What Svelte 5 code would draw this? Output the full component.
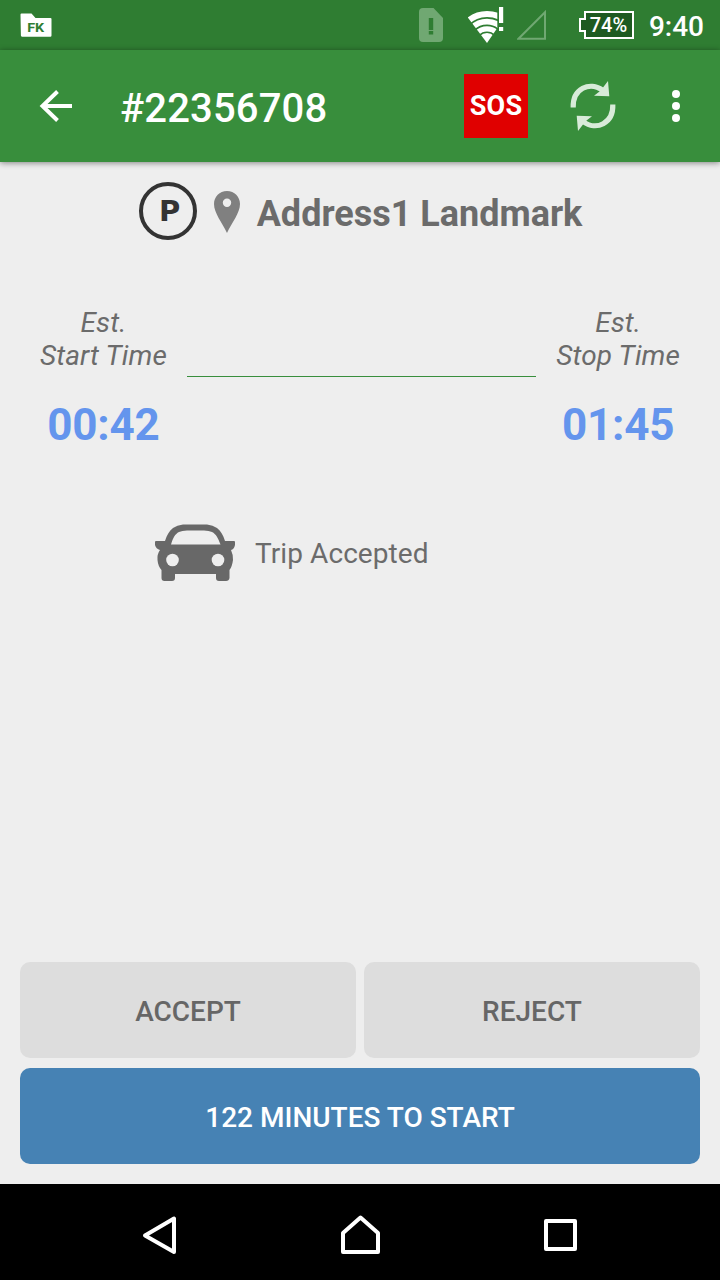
<script>
	let tripId = "22356708";
	let battery = 74;
	let clock = "9:40";
	let address = "Address1 Landmark";
	let minutesToStart = 122;

	const times = [
		{ label: "Start Time", value: "00:42" },
		{ label: "Stop Time", value: "01:45" }
	];
</script>

<div class="screen">
	<div class="status">
		<svg class="folder" width="32" height="25" viewBox="0 0 32 25">
			<path
				d="M1.5 .5H11.5L15.500 5H30.500Q31.500 5 31.500 6V22.500Q31.500 23.700 30.300 23.700H2Q.900 23.700 .900 22.600L.500 1.500Q.500 .500 1.500 .5Z"
				fill="#fff"
			/>
			<text x="7.200" y="19.200" textLength="17" lengthAdjust="spacingAndGlyphs">FK</text>
		</svg>

		<div class="indicators">
			<svg width="24" height="34" viewBox="0 0 24 34">
				<path
					d="M4 0H14.500L24 10V30Q24 34 20 34H4Q0 34 0 30V4Q0 0 4 0Z"
					fill="#70a872"
				/>
				<path d="M9.800 10H14.200V22H9.800ZM9.800 23H14.200V26.500H9.800Z" fill="#2f7d32" />
			</svg>
			<svg class="wifi" width="36" height="36" viewBox="0 0 36 36">
				<clipPath id="fan"><path d="M19 36L-2 8V0H29.300V21L19 36Z" /></clipPath>
				<g clip-path="url(#fan)" fill="none" stroke="#fff">
					<circle cx="19" cy="36" r="29" stroke-width="6" />
					<circle cx="19" cy="36" r="21.300" stroke-width="5.800" />
					<circle cx="19" cy="36" r="14.200" stroke-width="5.200" />
					<circle cx="19" cy="36" r="5" stroke-width="10" />
				</g>
				<path d="M31 0H35.200V16H31ZM31 20H35.200V24H31Z" fill="#fff" />
			</svg>
			<svg class="signal" width="30" height="30" viewBox="0 0 30 30">
				<path d="M1.500 28.700H28V2.200Z" fill="none" stroke="#70a872" stroke-width="2" />
			</svg>
			<div class="battery">
				<svg width="55" height="28" viewBox="0 0 55 28">
					<path
						d="M6 1H54V27H6V20H1V8H6Z"
						fill="#1e5a21"
						stroke="#fff"
						stroke-width="2"
					/>
				</svg>
				<span>{battery}%</span>
			</div>
			<span class="clock">{clock}</span>
		</div>
	</div>

	<header>
		<svg class="back" width="34" height="34" viewBox="0 0 34 34">
			<path
				d="M18.500 2.500L3.500 17L18.500 31.500M3.500 17H33"
				fill="none"
				stroke="#fff"
				stroke-width="4"
			/>
		</svg>
		<h1>#{tripId}</h1>
		<div class="sos">SOS</div>
		<svg class="refresh" width="46" height="50" viewBox="0 0 46 50">
			<g id="half">
				<path d="M3.200 26.500C2.500 8 19.500 -.500 33 9.500" fill="none" stroke="#d8ebd9" stroke-width="5.200" />
				<path d="M38 0L39.300 15.200L24 14.800L29.500 10.500L33 6.500Z" fill="#d8ebd9" />
			</g>
			<use href="#half" transform="rotate(180 23 25)" />
		</svg>
		<svg class="more" width="8" height="32" viewBox="0 0 8 32">
			<circle cx="4" cy="4" r="4" />
			<circle cx="4" cy="16" r="4" />
			<circle cx="4" cy="28" r="4" />
		</svg>
	</header>

	<main>
		<div class="address">
			<div class="badge">P</div>
			<svg class="pin" width="26" height="42" viewBox="0 0 26 42">
				<path
					d="M13 0C5.500 0 0 5.800 0 13C0 22 8 31.500 13 42C18 31.500 26 22 26 13C26 5.800 20.500 0 13 0ZM13 7.500A4.200 4.200 0 1 1 13 15.900A4.200 4.200 0 1 1 13 7.500Z"
					fill="#808080"
					fill-rule="evenodd"
				/>
			</svg>
			<h2>{address}</h2>
		</div>

		<div class="times">
			{#each times as time, i}
				{#if i > 0}
					<div class="line"></div>
				{/if}
				<div class="time">
					<p>Est.<br />{time.label}</p>
					<strong>{time.value}</strong>
				</div>
			{/each}
		</div>

		<div class="trip">
			<svg width="80" height="58" viewBox="0 0 80 58">
				<path
					d="M1 17H10C12 11 14 7 18 4Q22 1 28 .500H52Q58 1 62 4C66 7 68 11 70 17H79Q80 17 80 18V21Q79 25.500 76 26Q78 30 78 36Q77 43 74.500 46V54Q74 57 71 57H64Q61 57 61 54V50H20V54Q20 57 17 57H9.500Q6.500 57 6.500 54V46Q3 42 2.500 36Q2 30 5 26Q1 25 0 21V18Q0 17 1 17ZM16 20.500H65.500C63 14 61 10 57 8Q54 6.500 49 6.500H32Q27 6.500 24 8C20 10 18 14 16 20.500Z"
					fill="#686868"
					fill-rule="evenodd"
				/>
				<circle cx="17.500" cy="36" r="6.300" fill="#eee" />
				<circle cx="63" cy="36" r="6.300" fill="#eee" />
			</svg>
			<p>Trip Accepted</p>
		</div>

		<div class="actions">
			<button type="button">ACCEPT</button>
			<button type="button">REJECT</button>
			<button type="button" class="start">{minutesToStart} MINUTES TO START</button>
		</div>
	</main>

	<nav>
		<svg width="40" height="40" viewBox="0 0 40 40">
			<path d="M5 20.500L34 3.500V37Z" />
		</svg>
		<svg width="40" height="40" viewBox="0 0 40 40">
			<path d="M20.500 2.500L38 18V37H3V18Z" />
		</svg>
		<svg width="40" height="40" viewBox="0 0 40 40">
			<path d="M6 6H35V34H6Z" />
		</svg>
	</nav>
</div>

<style>
	:global(body) {
		margin: 0;
	}

	.screen {
		width: 720px;
		height: 1280px;
		display: flex;
		flex-direction: column;
		overflow: hidden;
		background: #eee;
		color: #6b6b6b;
		font-family: Roboto, sans-serif;
	}

	svg {
		display: block;
		flex: none;
	}

	h1,
	h2,
	p {
		margin: 0;
	}

	.status {
		height: 50px;
		flex: none;
		display: flex;
		justify-content: space-between;
		align-items: center;
		box-sizing: border-box;
		padding: 0 16px 0 20px;
		background: #2f7d32;
		color: #fff;
	}

	.folder text {
		font: 700 13px Roboto, sans-serif;
		fill: #2f7d32;
	}

	.indicators {
		display: flex;
		align-items: center;
		height: 52px;
	}

	.wifi {
		margin: 0 13px 0 25px;
	}

	.signal {
		margin-right: 32px;
	}

	.battery {
		display: grid;
		align-items: center;
		margin-right: 15px;
	}

	.battery > * {
		grid-area: 1 / 1;
	}

	.battery span {
		padding-left: 4px;
		text-align: center;
		font-size: 20px;
		font-weight: 500;
		line-height: 28px;
	}

	.clock {
		padding-top: 4px;
		font-size: 28px;
		font-weight: 500;
		line-height: 32px;
	}

	header {
		height: 112px;
		flex: none;
		display: flex;
		align-items: center;
		box-sizing: border-box;
		padding: 0 40px 0 39px;
		background: #388e3c;
		box-shadow: 0 1px 6px rgba(0, 0, 0, 0.45);
		color: #fff;
	}

	h1 {
		flex: 1;
		padding: 6px 0 0 47px;
		font-size: 40px;
		font-weight: 500;
		letter-spacing: 0.15px;
		line-height: 48px;
	}

	.sos {
		width: 64px;
		height: 64px;
		background: #e00000;
		font-size: 27px;
		font-weight: 700;
		letter-spacing: 0.2px;
		line-height: 65px;
		text-align: center;
	}

	.refresh {
		margin: 0 56.5px 0 41.5px;
	}

	.more {
		fill: #fff;
	}

	main {
		flex: 1;
		display: flex;
		flex-direction: column;
		padding: 20px 20px;
	}

	.address {
		display: flex;
		align-items: center;
		justify-content: center;
		height: 58px;
		padding-left: 1px;
	}

	.badge {
		width: 58px;
		height: 58px;
		box-sizing: border-box;
		padding-left: 4px;
		border: 4px solid #333;
		border-radius: 50%;
		margin-right: 17px;
		color: #333;
		font: 700 29px/50px "DejaVu Sans", sans-serif;
		text-align: center;
	}

	.pin {
		margin-top: 2px;
	}

	h2 {
		padding: 6px 0 0 17px;
		font-size: 36px;
		font-weight: 700;
		line-height: 44px;
	}

	.times {
		display: flex;
		justify-content: space-between;
		margin: 66px 20px 0;
	}

	.time {
		text-align: center;
	}

	.time p {
		font-size: 28px;
		font-style: italic;
		letter-spacing: 0.1px;
		line-height: 33px;
	}

	.time strong {
		display: block;
		margin-top: 27px;
		color: #6495ed;
		font-size: 44px;
		letter-spacing: -0.2px;
		line-height: 52px;
	}

	.line {
		flex: 1;
		height: 1px;
		margin: 70px 20px 0;
		background: #388e3c;
	}

	.trip {
		display: flex;
		align-items: center;
		margin: 73px 0 0 135px;
		font-size: 28px;
	}

	.trip p {
		padding-left: 20px;
		letter-spacing: 0.08px;
	}

	.actions {
		display: grid;
		grid-template-columns: 1fr 1fr;
		gap: 10px 8px;
		margin-top: auto;
	}

	button {
		height: 96px;
		padding: 3px 0 0;
		border: none;
		border-radius: 10px;
		background: #ddd;
		color: #666;
		font: 500 28px Roboto, sans-serif;
	}

	.start {
		grid-column: span 2;
		background: #4682b4;
		color: #fff;
	}

	nav {
		height: 96px;
		flex: none;
		display: flex;
		justify-content: space-between;
		box-sizing: border-box;
		padding: 31px 140px 25px;
		background: #000;
	}

	nav path {
		fill: none;
		stroke: #fff;
		stroke-width: 4;
		stroke-linejoin: round;
	}
</style>
